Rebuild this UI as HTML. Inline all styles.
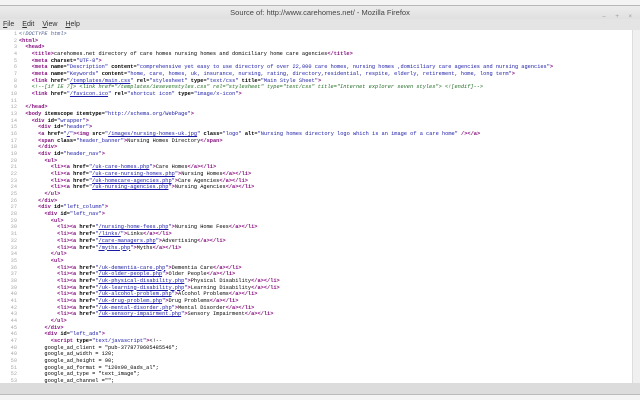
<!DOCTYPE html>
<html><head><style>
html,body{margin:0;padding:0;width:640px;height:400px;overflow:hidden;background:#fff;font-family:"Liberation Sans",sans-serif}
#top{position:absolute;left:0;top:0;width:640px;height:5px;background:#f4f4f4}
#title{position:absolute;left:0;top:5px;width:640px;height:13px;background:linear-gradient(#ececec,#e0e0e0);border-top:1px solid #b8b8b8;font-size:7.5px;color:#444;text-align:center;line-height:13px}
#ctl{position:absolute;right:4px;top:5px;font-size:6px;color:#999;letter-spacing:4px;line-height:13px}
#menu{position:absolute;left:0;top:19px;width:640px;height:11px;background:#e4e4e4;font-size:7px;color:#333;line-height:11px}
#menu span{margin-left:3px;margin-right:5px}
#code{position:absolute;left:0;top:30px;width:632px;height:353px;overflow:hidden;background:#fff}
pre{margin:0;padding-top:1px;font-family:"Liberation Mono",monospace;font-size:5.3px;line-height:6.67px;color:#000}
.n{display:inline-block;width:17px;text-align:right;color:#aaa;margin-right:2px}
.t{color:#881280;font-weight:bold}.a{font-weight:bold}.v{color:#1a1aa6}.u{color:#1a1aa6;text-decoration:underline}
.c{color:#236e25;font-style:italic}.d{color:#4f5f8f;font-style:italic}
#sb{position:absolute;left:632px;top:30px;width:8px;height:353px;background:#f0f0f0;border-left:1px solid #ddd}
#th{position:absolute;left:633px;top:33px;width:5px;height:30px;background:#c4c4c4;border-radius:2px}
#status{position:absolute;left:0;top:383px;width:640px;height:11px;background:#dcdcdc;border-bottom:1px solid #bbb}
#bot{position:absolute;left:0;top:395px;width:640px;height:5px;background:#f4f4f4}
</style></head><body>
<div id="top"></div>
<div id="title">Source of: http://www.carehomes.net/ - Mozilla Firefox<span id="ctl">– + ×</span></div>
<div id="menu"><span><u>F</u>ile</span><span><u>E</u>dit</span><span><u>V</u>iew</span><span><u>H</u>elp</span></div>
<div id="code"><pre><span class="n">1</span><span class="d">&lt;!DOCTYPE html&gt;</span>
<span class="n">2</span><span class="t">&lt;html&gt;</span>
<span class="n">3</span>  <span class="t">&lt;head&gt;</span>
<span class="n">4</span>    <span class="t">&lt;title&gt;</span>carehomes.net directory of care homes nursing homes and domiciliary home care agencies<span class="t">&lt;/title&gt;</span>
<span class="n">5</span>    <span class="t">&lt;meta</span> <span class="a">charset</span>=<span class="v">"UTF-8"</span><span class="t">&gt;</span>
<span class="n">6</span>    <span class="t">&lt;meta</span> <span class="a">name</span>=<span class="v">"Description"</span> <span class="a">content</span>=<span class="v">"comprehensive yet easy to use directory of over 22,000 care homes, nursing homes ,domiciliary care agencies and nursing agencies"</span><span class="t">&gt;</span>
<span class="n">7</span>    <span class="t">&lt;meta</span> <span class="a">name</span>=<span class="v">"Keywords"</span> <span class="a">content</span>=<span class="v">"home, care, homes, uk, insurance, nursing, rating, directory,residential, respite, elderly, retirement, home, long term"</span><span class="t">&gt;</span>
<span class="n">8</span>    <span class="t">&lt;link</span> <span class="a">href</span>=<span class="v">"</span><span class="u">/templates/main.css</span><span class="v">"</span> <span class="a">rel</span>=<span class="v">"stylesheet"</span> <span class="a">type</span>=<span class="v">"text/css"</span> <span class="a">title</span>=<span class="v">"Main Style Sheet"</span><span class="t">&gt;</span>
<span class="n">9</span>    <span class="c">&lt;!--[if IE 7]&gt; &lt;link href="/templates/iesevenstyles.css" rel="stylesheet" type="text/css" title="Internet explorer seven styles"&gt; &lt;![endif]--&gt;</span>
<span class="n">10</span>    <span class="t">&lt;link</span> <span class="a">href</span>=<span class="v">"</span><span class="u">/favicon.ico</span><span class="v">"</span> <span class="a">rel</span>=<span class="v">"shortcut icon"</span> <span class="a">type</span>=<span class="v">"image/x-icon"</span><span class="t">&gt;</span>
<span class="n">11</span>
<span class="n">12</span>  <span class="t">&lt;/head&gt;</span>
<span class="n">13</span>  <span class="t">&lt;body</span> <span class="a">itemscope</span> <span class="a">itemtype</span>=<span class="v">"http://schema.org/WebPage"</span><span class="t">&gt;</span>
<span class="n">14</span>    <span class="t">&lt;div</span> <span class="a">id</span>=<span class="v">"wrapper"</span><span class="t">&gt;</span>
<span class="n">15</span>      <span class="t">&lt;div</span> <span class="a">id</span>=<span class="v">"header"</span><span class="t">&gt;</span>
<span class="n">16</span>      <span class="t">&lt;a</span> <span class="a">href</span>=<span class="v">"</span><span class="u">/</span><span class="v">"</span><span class="t">&gt;&lt;img</span> <span class="a">src</span>=<span class="v">"</span><span class="u">/images/nursing-homes-uk.jpg</span><span class="v">"</span> <span class="a">class</span>=<span class="v">"logo"</span> <span class="a">alt</span>=<span class="v">"Nursing homes directory logo which is an image of a care home"</span> <span class="t">/&gt;&lt;/a&gt;</span>
<span class="n">17</span>      <span class="t">&lt;span</span> <span class="a">class</span>=<span class="v">"header_banner"</span><span class="t">&gt;</span>Nursing Homes Directory<span class="t">&lt;/span&gt;</span>
<span class="n">18</span>      <span class="t">&lt;/div&gt;</span>
<span class="n">19</span>      <span class="t">&lt;div</span> <span class="a">id</span>=<span class="v">"header_nav"</span><span class="t">&gt;</span>
<span class="n">20</span>        <span class="t">&lt;ul&gt;</span>
<span class="n">21</span>          <span class="t">&lt;li&gt;&lt;a</span> <span class="a">href</span>=<span class="v">"</span><span class="u">/uk-care-homes.php</span><span class="v">"</span><span class="t">&gt;</span>Care Homes<span class="t">&lt;/a&gt;&lt;/li&gt;</span>
<span class="n">22</span>          <span class="t">&lt;li&gt;&lt;a</span> <span class="a">href</span>=<span class="v">"</span><span class="u">/uk-care-nursing-homes.php</span><span class="v">"</span><span class="t">&gt;</span>Nursing Homes<span class="t">&lt;/a&gt;&lt;/li&gt;</span>
<span class="n">23</span>          <span class="t">&lt;li&gt;&lt;a</span> <span class="a">href</span>=<span class="v">"</span><span class="u">/uk-homecare-agencies.php</span><span class="v">"</span><span class="t">&gt;</span>Care Agencies<span class="t">&lt;/a&gt;&lt;/li&gt;</span>
<span class="n">24</span>          <span class="t">&lt;li&gt;&lt;a</span> <span class="a">href</span>=<span class="v">"</span><span class="u">/uk-nursing-agencies.php</span><span class="v">"</span><span class="t">&gt;</span>Nursing Agencies<span class="t">&lt;/a&gt;&lt;/li&gt;</span>
<span class="n">25</span>        <span class="t">&lt;/ul&gt;</span>
<span class="n">26</span>      <span class="t">&lt;/div&gt;</span>
<span class="n">27</span>      <span class="t">&lt;div</span> <span class="a">id</span>=<span class="v">"left_column"</span><span class="t">&gt;</span>
<span class="n">28</span>        <span class="t">&lt;div</span> <span class="a">id</span>=<span class="v">"left_nav"</span><span class="t">&gt;</span>
<span class="n">29</span>          <span class="t">&lt;ul&gt;</span>
<span class="n">30</span>            <span class="t">&lt;li&gt;&lt;a</span> <span class="a">href</span>=<span class="v">"</span><span class="u">/nursing-home-fees.php</span><span class="v">"</span><span class="t">&gt;</span>Nursing Home Fees<span class="t">&lt;/a&gt;&lt;/li&gt;</span>
<span class="n">31</span>            <span class="t">&lt;li&gt;&lt;a</span> <span class="a">href</span>=<span class="v">"</span><span class="u">/links/</span><span class="v">"</span><span class="t">&gt;</span>Links<span class="t">&lt;/a&gt;&lt;/li&gt;</span>
<span class="n">32</span>            <span class="t">&lt;li&gt;&lt;a</span> <span class="a">href</span>=<span class="v">"</span><span class="u">/care-managers.php</span><span class="v">"</span><span class="t">&gt;</span>Advertising<span class="t">&lt;/a&gt;&lt;/li&gt;</span>
<span class="n">33</span>            <span class="t">&lt;li&gt;&lt;a</span> <span class="a">href</span>=<span class="v">"</span><span class="u">/myths.php</span><span class="v">"</span><span class="t">&gt;</span>Myths<span class="t">&lt;/a&gt;&lt;/li&gt;</span>
<span class="n">34</span>          <span class="t">&lt;/ul&gt;</span>
<span class="n">35</span>          <span class="t">&lt;ul&gt;</span>
<span class="n">36</span>            <span class="t">&lt;li&gt;&lt;a</span> <span class="a">href</span>=<span class="v">"</span><span class="u">/uk-dementia-care.php</span><span class="v">"</span><span class="t">&gt;</span>Dementia Care<span class="t">&lt;/a&gt;&lt;/li&gt;</span>
<span class="n">37</span>            <span class="t">&lt;li&gt;&lt;a</span> <span class="a">href</span>=<span class="v">"</span><span class="u">/uk-older-people.php</span><span class="v">"</span><span class="t">&gt;</span>Older People<span class="t">&lt;/a&gt;&lt;/li&gt;</span>
<span class="n">38</span>            <span class="t">&lt;li&gt;&lt;a</span> <span class="a">href</span>=<span class="v">"</span><span class="u">/uk-physical-disability.php</span><span class="v">"</span><span class="t">&gt;</span>Physical Disability<span class="t">&lt;/a&gt;&lt;/li&gt;</span>
<span class="n">39</span>            <span class="t">&lt;li&gt;&lt;a</span> <span class="a">href</span>=<span class="v">"</span><span class="u">/uk-learning-disability.php</span><span class="v">"</span><span class="t">&gt;</span>Learning Disability<span class="t">&lt;/a&gt;&lt;/li&gt;</span>
<span class="n">40</span>            <span class="t">&lt;li&gt;&lt;a</span> <span class="a">href</span>=<span class="v">"</span><span class="u">/uk-alcohol-problem.php</span><span class="v">"</span><span class="t">&gt;</span>Alcohol Problems<span class="t">&lt;/a&gt;&lt;/li&gt;</span>
<span class="n">41</span>            <span class="t">&lt;li&gt;&lt;a</span> <span class="a">href</span>=<span class="v">"</span><span class="u">/uk-drug-problem.php</span><span class="v">"</span><span class="t">&gt;</span>Drug Problems<span class="t">&lt;/a&gt;&lt;/li&gt;</span>
<span class="n">42</span>            <span class="t">&lt;li&gt;&lt;a</span> <span class="a">href</span>=<span class="v">"</span><span class="u">/uk-mental-disorder.php</span><span class="v">"</span><span class="t">&gt;</span>Mental Disorder<span class="t">&lt;/a&gt;&lt;/li&gt;</span>
<span class="n">43</span>            <span class="t">&lt;li&gt;&lt;a</span> <span class="a">href</span>=<span class="v">"</span><span class="u">/uk-sensory-impairment.php</span><span class="v">"</span><span class="t">&gt;</span>Sensory Impairment<span class="t">&lt;/a&gt;&lt;/li&gt;</span>
<span class="n">44</span>          <span class="t">&lt;/ul&gt;</span>
<span class="n">45</span>        <span class="t">&lt;/div&gt;</span>
<span class="n">46</span>        <span class="t">&lt;div</span> <span class="a">id</span>=<span class="v">"left_ads"</span><span class="t">&gt;</span>
<span class="n">47</span>          <span class="t">&lt;script</span> <span class="a">type</span>=<span class="v">"text/javascript"</span><span class="t">&gt;</span>&lt;!--
<span class="n">48</span>        google_ad_client = "pub-3778770605485546";
<span class="n">49</span>        google_ad_width = 120;
<span class="n">50</span>        google_ad_height = 90;
<span class="n">51</span>        google_ad_format = "120x90_0ads_al";
<span class="n">52</span>        google_ad_type = "text_image";
<span class="n">53</span>        google_ad_channel ="";
</pre></div>
<div id="sb"><div id="th"></div></div>
<div id="status"></div>
<div id="bot"></div>
</body></html>
